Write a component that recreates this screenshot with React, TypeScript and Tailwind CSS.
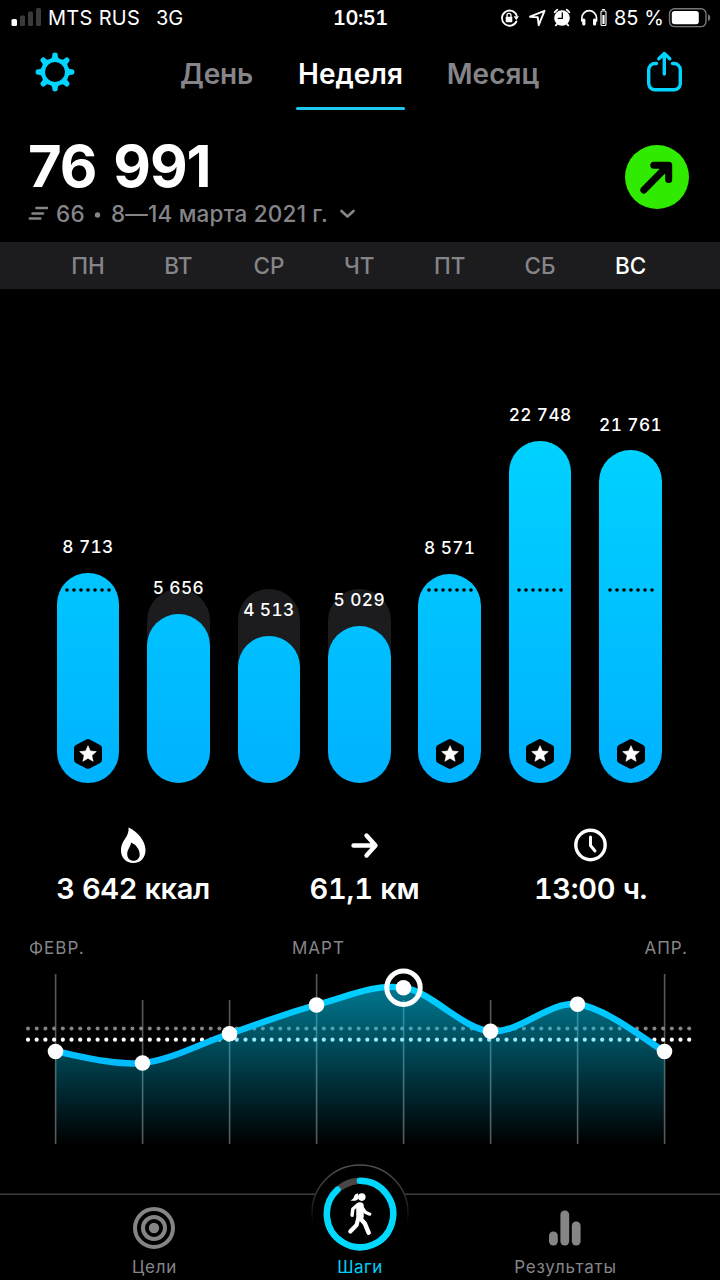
import type { ReactNode } from "react";

const days = ["ПН", "ВТ", "СР", "ЧТ", "ПТ", "СБ", "ВС"];

type Bar = { label: string; height: number; goal: boolean };

const bars: Bar[] = [
  { label: "8 713", height: 210, goal: true },
  { label: "5 656", height: 169, goal: false },
  { label: "4 513", height: 147, goal: false },
  { label: "5 029", height: 157, goal: false },
  { label: "8 571", height: 209, goal: true },
  { label: "22 748", height: 342, goal: true },
  { label: "21 761", height: 332.5, goal: true },
];

const trend: [number, number][] = [
  [55.5, 1051.5],
  [142.5, 1063],
  [229.5, 1033.7],
  [316.5, 1005],
  [403.5, 987.7],
  [490.5, 1031.2],
  [577.5, 1004.2],
  [664.5, 1051.5],
];

function curve(p: [number, number][]) {
  let d = `M${p[0][0]} ${p[0][1]}`;
  for (let i = 0; i < p.length - 1; i++) {
    const a = p[Math.max(i - 1, 0)];
    const b = p[i];
    const c = p[i + 1];
    const e = p[Math.min(i + 2, p.length - 1)];
    d += ` C${b[0] + (c[0] - a[0]) / 6} ${b[1] + (c[1] - a[1]) / 6} ${c[0] - (e[0] - b[0]) / 6} ${c[1] - (e[1] - b[1]) / 6} ${c[0]} ${c[1]}`;
  }
  return d;
}

function StatusBar() {
  return (
    <div className="flex h-9 items-center text-[20px] leading-none">
      <svg className="ml-[11px] h-5 w-[32px] shrink-0" viewBox="0 0 32 20">
        <rect x="0.5" y="11" width="5.5" height="7" rx="1.5" fill="#fff" />
        <rect x="9" y="7.5" width="5" height="10.5" rx="1.5" fill="#3a3a3c" />
        <rect x="17" y="3.5" width="5" height="14.5" rx="1.5" fill="#3a3a3c" />
        <rect x="25" y="0" width="5" height="18" rx="1.5" fill="#3a3a3c" />
      </svg>
      <span className="ml-[5px] w-[108px] whitespace-nowrap tracking-[0.3px]">MTS RUS</span>
      <span className="w-[177px]">3G</span>
      <span className="w-[160px] font-semibold tabular-nums tracking-[-0.5px]">10:51</span>
      <svg className="ml-[5px] h-[24px] w-[112px] shrink-0" viewBox="498 6 112 24" fill="none" stroke="#fff" strokeWidth="1.8" strokeLinecap="round" strokeLinejoin="round">
        <path d="M516.4 21.5a7.6 7.6 0 1 1 .3-6" />
        <path d="M513.6 16.3h5.4l-2.7 4z" fill="#fff" stroke="none" />
        <rect x="505.7" y="16.8" width="6.6" height="5.4" rx="0.8" fill="#fff" stroke="none" />
        <path d="M507 17v-1.6a2 2 0 0 1 4 0V17" strokeWidth="1.3" />
        <path d="m530 16.7 14.5-5.9-5.8 14.4-1-8z" strokeWidth="1.9" />
        <circle cx="562" cy="18" r="7.8" fill="#fff" stroke="none" />
        <path d="M562.3 12.8v5.6h-4" stroke="#000" strokeWidth="1.3" />
        <path d="M554.7 12.2a9 9 0 0 1 2.6-2.5M569.3 12.2a9 9 0 0 0-2.6-2.5M557 24.2l-1.2 1.2M567 24.2l1.2 1.2" />
        <path d="M581.9 21v-3a7.3 7.3 0 0 1 14.6 0v3" strokeWidth="1.7" />
        <path d="M583.8 20v4M594.6 20v4" strokeWidth="3.2" />
        <rect x="601" y="11" width="5" height="14.5" rx="1" strokeWidth="1.1" />
        <path d="M602.5 9.6h2" strokeWidth="1.4" />
        <rect x="602.4" y="15" width="2.2" height="9" fill="#fff" stroke="none" />
      </svg>
      <span className="ml-[4px] w-[54px] whitespace-nowrap">85 %</span>
      <svg className="h-[20px] w-[44px] shrink-0" viewBox="668 8 44 20" fill="none">
        <rect x="669.5" y="8.8" width="36.5" height="17.8" rx="5" stroke="#777" strokeWidth="1.4" />
        <rect x="671.8" y="11" width="27" height="13.3" rx="2.8" fill="#fff" />
        <path d="M708 14.2a3.8 3.8 0 0 1 0 7z" fill="#777" />
      </svg>
    </div>
  );
}

function Nav() {
  return (
    <div className="flex h-[74px] items-start text-[28px] font-semibold leading-[34px]">
      <svg className="ml-[35px] mt-[16px] h-10 w-10 shrink-0" viewBox="-20 -20 40 40">
        <circle r="12" fill="none" stroke="#00d4ff" strokeWidth="4" />
        {[0, 45, 90, 135, 180, 225, 270, 315].map((a) => (
          <path key={a} d="M-5-12.600Q-2.700-14-2.700-16V-17q0-2.400 2.700-2.400t2.700 2.400v1Q2.700-14 5-12.600z" fill="#00d4ff" transform={`rotate(${a})`} />
        ))}
      </svg>
      <div className="ml-[105px] mt-[21px] flex w-[73px] justify-center whitespace-nowrap tracking-[-0.2px] text-[#858589]">День</div>
      <div className="ml-[43px] mt-[21px] flex h-[53px] w-[109px] flex-col items-center justify-between whitespace-nowrap">
        <span>Неделя</span>
        <div className="h-[3px] w-full rounded-full bg-[#1cc8f0]" />
      </div>
      <div className="ml-[41px] mt-[21px] flex w-[94px] justify-center whitespace-nowrap text-[#858589]">Месяц</div>
      <svg className="ml-[104px] mt-[14px] h-[44px] w-[40px]" viewBox="644 50 40 44" fill="none" stroke="#00d4ff" strokeWidth="3.4" strokeLinecap="round" strokeLinejoin="round">
        <path d="M656.5 63.5h-1.5a6.3 6.3 0 0 0-6.3 6.3v13.7a6.3 6.3 0 0 0 6.3 6.3h19a6.3 6.3 0 0 0 6.3-6.3V69.8a6.3 6.3 0 0 0-6.3-6.3h-1.5" />
        <path d="M664.3 74V54M658.8 58.8l5.500-5.300 5.500 5.300" />
      </svg>
    </div>
  );
}

function Summary() {
  return (
    <div className="flex h-[132px] justify-between pl-[28px] pr-[31px]">
      <div className="pt-[27px]">
        <div className="whitespace-nowrap text-[58px] font-bold leading-[58px] tracking-[-1px] [word-spacing:4px]">76 991</div>
        <div className="mt-[4.5px] flex items-center whitespace-nowrap text-[22.5px] font-medium leading-[28px] text-[#858589]">
          <svg className="h-5 w-[28px]" viewBox="0 0 28 20" stroke="#858589" strokeWidth="2.6" strokeLinecap="round">
            <path d="M8.5 4h10.500M4.500 9.500h10.500M1.800 14.500h10.500" />
          </svg>
          <span className="w-[36px] tracking-[0.3px]">66</span>
          <svg className="mr-[10px] h-2 w-[9px]" viewBox="0 0 9 8"><circle cx="5.5" cy="5" r="2.7" fill="#858589" /></svg>
          <span className="w-[229px] tracking-[0.2px]">8—14 марта 2021 г.</span>
          <svg className="h-4 w-4" viewBox="0 0 16 16" fill="none" stroke="#858589" strokeWidth="2.6" strokeLinecap="round" strokeLinejoin="round">
            <path d="m1.500 5 6 5.500 6-5.500" />
          </svg>
        </div>
      </div>
      <svg className="mt-[35px] h-16 w-16" viewBox="0 0 64 64">
        <circle cx="32" cy="32" r="32" fill="#30eb00" />
        <path d="M18.8 45 42 21.500M28.800 20.300H43.700V34.500" fill="none" stroke="#000" strokeWidth="7" strokeLinecap="round" strokeLinejoin="round" />
        <path d="M33 22h11v11z" />
      </svg>
    </div>
  );
}

function Badge() {
  return (
    <svg className="h-8 w-8" viewBox="-16 -16 32 32">
      <path d="M0-11.500 10.500-6V6L0 11.500-10.500 6V-6z" strokeWidth="7" stroke="#000" strokeLinejoin="round" />
      <path d="m0-8.300 2.300 5.300 6 .6-4.500 3.900 1.300 5.800L0 4.300l-5.100 3 1.300-5.800-4.500-3.900 6-.6z" fill="#fff" stroke="#fff" strokeWidth=".6" strokeLinejoin="round" />
    </svg>
  );
}

function BarColumn({ bar }: { bar: Bar }) {
  return (
    <div className="grid h-full grid-rows-1 items-end justify-items-center">
      <div className={`col-start-1 row-start-1 h-[193.5px] w-[62.5px] rounded-full bg-[#1c1c1e] ${bar.goal ? "invisible" : ""}`} />
      <div className="col-start-1 row-start-1 flex flex-col items-center">
        <span className="mb-[15.5px] whitespace-nowrap text-[17.3px] font-medium tabular-nums leading-5 tracking-[0.4px]">{bar.label}</span>
        <div className="flex w-[62.5px] flex-col items-center justify-end rounded-full bg-[linear-gradient(to_top,#00b2ff,#00d2ff_342px)]" style={{ height: bar.height }}>
          {bar.goal && (
            <>
              <svg className="h-1 w-[48px]" viewBox="0 0 48 4">
                {[0, 1, 2, 3, 4, 5, 6].map((n) => (
                  <circle key={n} cx={3 + n * 7} cy="2" r="1.8" />
                ))}
              </svg>
              <div className="mb-[12.5px] mt-[146px]">
                <Badge />
              </div>
            </>
          )}
        </div>
      </div>
    </div>
  );
}

function Stat({ icon, children }: { icon: ReactNode; children: ReactNode }) {
  return (
    <div className="flex flex-col items-center">
      {icon}
      <span className="mt-[6px] whitespace-nowrap leading-9">{children}</span>
    </div>
  );
}

function Trend() {
  const d = curve(trend);
  const dots = Array.from({ length: 77 }, (_, i) => 28 + i * 8.7);
  return (
    <svg className="h-[190px] w-full" viewBox="0 962 720 190">
      <defs>
        <linearGradient id="area" gradientUnits="userSpaceOnUse" x1="0" y1="987" x2="0" y2="1144">
          <stop offset="0" stopColor="#00c8f0" stopOpacity=".6" />
          <stop offset="1" stopColor="#00c8f0" stopOpacity="0" />
        </linearGradient>
        <linearGradient id="stroke" gradientUnits="userSpaceOnUse" x1="0" y1="987" x2="0" y2="1063">
          <stop offset="0" stopColor="#00d0ff" />
          <stop offset="1" stopColor="#00bbff" />
        </linearGradient>
      </defs>
      {trend.map(([x], i) => (
        <path key={x} d={`M${x + 0.1} ${i === 0 || i === 3 || i === 7 ? 974 : 1000}V1144`} stroke="#58585a" strokeWidth="1.6" />
      ))}
      {dots.map((x) => (
        <g key={x}>
          <circle cx={x} cy="1028.6" r="2" fill="#858589" />
          <circle cx={x} cy="1039.7" r="2.1" fill="#fff" />
        </g>
      ))}
      <path d={`${d} V1144 H55.5z`} fill="url(#area)" />
      <path d={d} fill="none" stroke="url(#stroke)" strokeWidth="6.4" />
      {trend.map(([x, y]) => (
        <circle key={x} cx={x} cy={y} r="7.8" fill="#fff" />
      ))}
      <circle cx="403.5" cy="987.7" r="16.7" fill="none" stroke="#fff" strokeWidth="5" />
    </svg>
  );
}

function TabBar() {
  return (
    <div className="grid h-[128px] grid-cols-1">
      <svg className="col-start-1 row-start-1 h-[128px] w-full" viewBox="0 1152 720 128" fill="none">
        <defs>
          <linearGradient id="rim" gradientUnits="userSpaceOnUse" x1="0" y1="1164" x2="0" y2="1224">
            <stop offset="0" stopColor="#505050" />
            <stop offset=".4" stopColor="#3c3c3c" />
            <stop offset="1" stopColor="#3c3c3c" stopOpacity="0" />
          </linearGradient>
        </defs>
        <path d="M0 1194.300H315.500M405 1194.300H720" stroke="#3c3c3c" strokeWidth="1.5" />
        <circle cx="360" cy="1213" r="48" stroke="url(#rim)" strokeWidth="1.5" />
      </svg>
      <div className="col-start-1 row-start-1 grid grid-cols-[308px_104px_306px] items-end text-[17px] leading-5 tracking-[0.8px] text-[#858589]">
        <div className="flex flex-col items-center pb-[3px]">
          <svg className="mb-[8px] h-[42px] w-[42px]" viewBox="-21 -21 42 42" fill="none" stroke="#858585">
            <circle r="19" strokeWidth="4" />
            <circle r="11" strokeWidth="4" />
            <circle r="5.2" fill="#858585" stroke="none" />
          </svg>
          <span className="pl-[1px]">Цели</span>
        </div>
        <div className="flex flex-col items-center pb-[3px] text-[#00d0f8]">
          <svg className="mb-[6px] h-[74px] w-[74px]" viewBox="323 1176.7 74 74" fill="none" strokeLinecap="round" strokeLinejoin="round">
            <path d="M340 1187.500Q347 1182 357 1180.700" stroke="#4b4646" strokeWidth="6.5" />
            <path d="M360 1180.500A33.200 33.200 0 1 1 337.500 1189.300" stroke="#00d8ff" strokeWidth="6.5" />
            <g stroke="#fff">
              <circle cx="361.8" cy="1196.8" r="3.8" fill="#fff" stroke="none" />
              <path d="M358 1193.200c-2.600 0-3.500 1.300-4 3.200-.6 1.700-1.800 2.900-3.500 3.700 3.200.8 6.900.3 8-2z" fill="#fff" stroke="none" />
              <path d="M360 1205.800v10" strokeWidth="7.5" />
              <path d="M358 1204.200l-5.200 4.600-.7 6.200" strokeWidth="3.4" />
              <path d="M362.500 1207.500l2.900 4.500 4.400 1.900" strokeWidth="3.2" />
              <path d="M359.300 1217l5.700 6.500 3.700 9" strokeWidth="4.4" />
              <path d="M358.300 1218l-1.700 6.700-6.300 6.500" strokeWidth="4.2" />
            </g>
          </svg>
          <span className="tracking-[0.5px]">Шаги</span>
        </div>
        <div className="flex flex-col items-center pb-[3px]">
          <svg className="mb-[11px] h-[36px] w-[34px]" viewBox="0 0 34 36" fill="#858585">
            <rect x="1" y="21.5" width="8.8" height="14" rx="4.2" />
            <rect x="12.4" y="0.5" width="8.8" height="35" rx="4.2" />
            <rect x="23.8" y="11.5" width="8.8" height="24" rx="4.2" />
          </svg>
          <span className="pl-[1px]">Результаты</span>
        </div>
      </div>
    </div>
  );
}

export default function App() {
  return (
    <div className="flex h-[1280px] w-[720px] flex-col overflow-hidden bg-black font-['Inter','Liberation_Sans',sans-serif] text-white">
      <StatusBar />
      <Nav />
      <Summary />
      <div className="h-[47px] bg-[#1c1c1e]">
        <div className="ml-[42.8px] grid h-[47px] w-[633px] grid-cols-7 items-center text-center text-[22.5px] font-medium text-[#858589]">
          {days.map((day, i) => (
            <span key={day} className={i === 6 ? "text-white" : ""}>{day}</span>
          ))}
        </div>
      </div>
      <div className="ml-[42.8px] grid h-[493.5px] w-[633px] grid-cols-7">
        {bars.map((bar) => (
          <BarColumn key={bar.label} bar={bar} />
        ))}
      </div>
      <div className="grid h-[151.5px] grid-cols-[266px_197px_255px] pt-[42px] text-[29px] font-semibold tabular-nums">
        <Stat
          icon={
            <svg className="h-10 w-10" viewBox="113 825 40 40">
              <path fill="#fff" fillRule="evenodd" d="M128.500 827.500c8.500 3.500 17 13 17 22.500 0 8.500-5.500 13-12.300 13-7 0-12.200-5-12.200-12.500 0-5.500 2-8.500 4.500-12.500 2-3.200 3.500-6 3-10.500zm2.500 15c0 4-3.800 6.500-3.800 11.500 0 4.200 2.700 6.800 6.300 6.800 3.800 0 6.200-2.600 6.200-6.300 0-5-3.700-10-8.700-12z" />
            </svg>
          }
        >
          <span className="tracking-[-0.4px]">3 642 ккал</span>
        </Stat>
        <Stat
          icon={
            <svg className="h-10 w-10" viewBox="345 825 40 40" fill="none" stroke="#fff" strokeWidth="4.4" strokeLinecap="round" strokeLinejoin="round">
              <path d="M353.500 845.500h21M366.500 835.500l9 10-9 10" />
            </svg>
          }
        >
          <span className="tracking-[-0.2px]">61,1 км</span>
        </Stat>
        <Stat
          icon={
            <svg className="h-10 w-10" viewBox="-19.5 -20 40 40" fill="none" stroke="#fff" strokeWidth="3" strokeLinecap="round" strokeLinejoin="round">
              <circle r="14.7" strokeWidth="3.4" />
              <path d="M0-8V.500L4.500 6" />
            </svg>
          }
        >
          <span className="tracking-[-0.3px]">13:00 ч.</span>
        </Stat>
      </div>
      <div className="flex h-[28px] items-center justify-between pl-[29px] pr-[32px] text-[17px] leading-none tracking-[1px] text-[#858589]">
        <span className="w-[263px]">ФЕВР.</span>
        <span className="grow">МАРТ</span>
        <span>АПР.</span>
      </div>
      <Trend />
      <TabBar />
    </div>
  );
}
